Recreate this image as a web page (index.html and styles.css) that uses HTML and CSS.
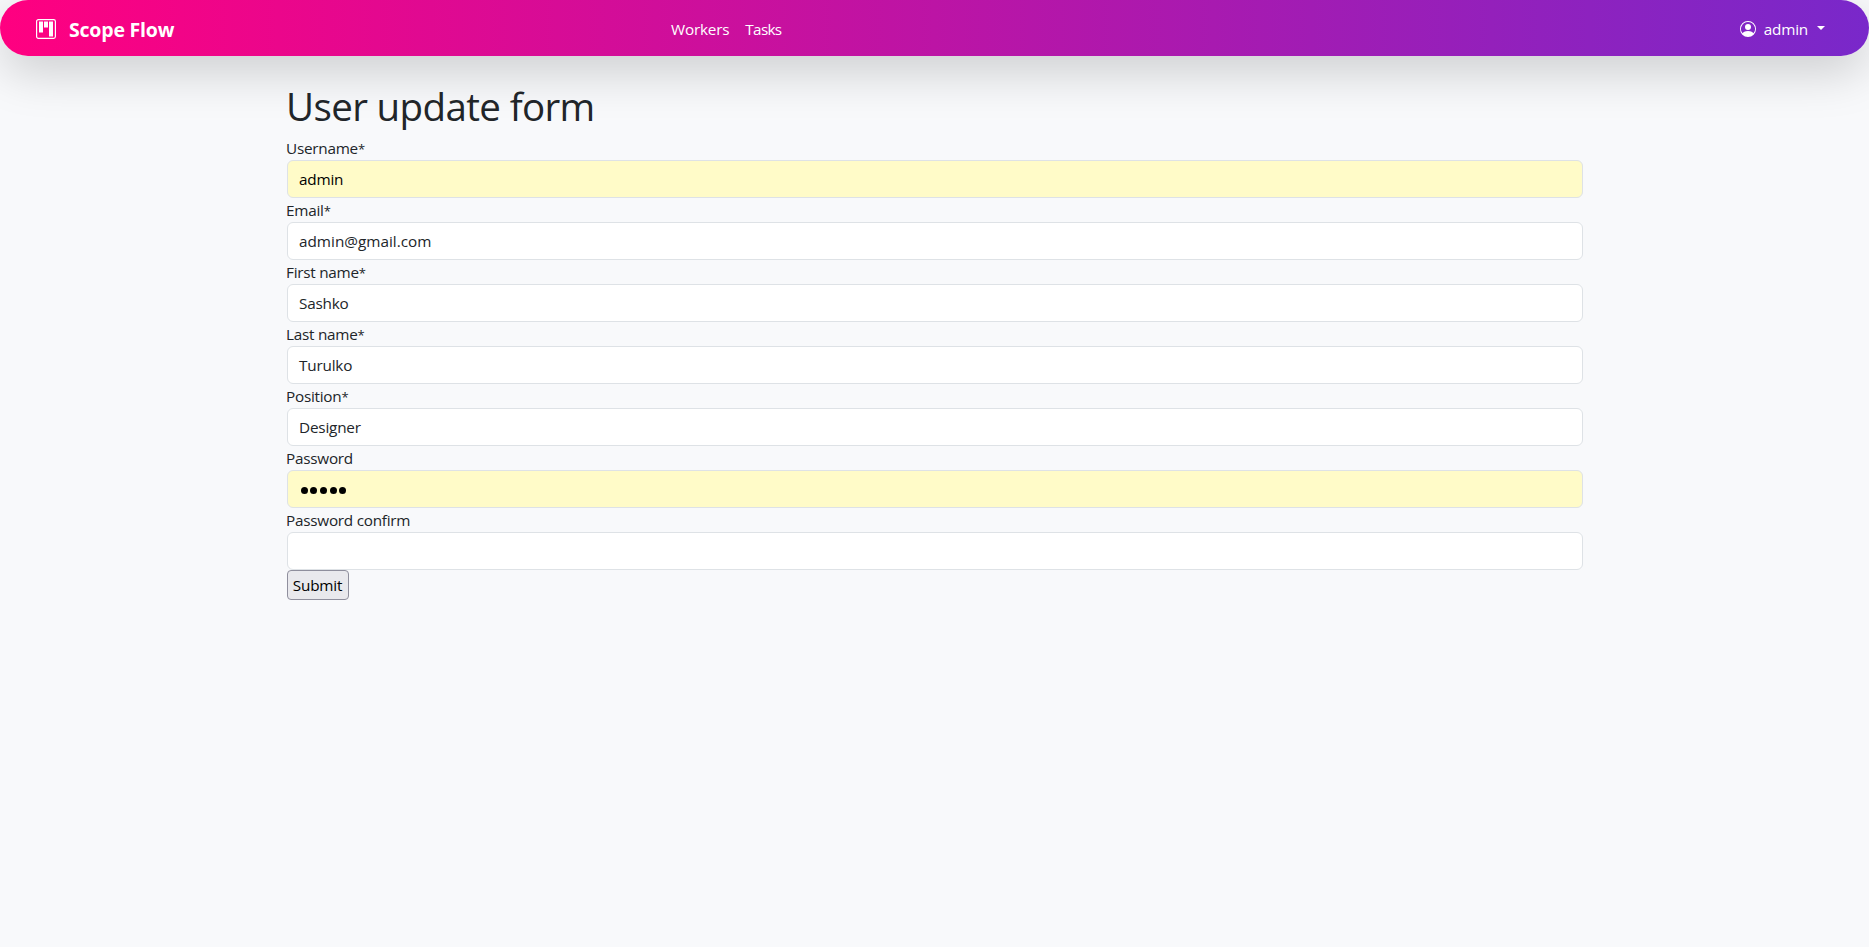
FILE: index.html
```html
<!DOCTYPE html>
<html lang="en">
<head>
<meta charset="utf-8">
<title>Scope Flow</title>
<link rel="stylesheet" href="styles.css">
</head>
<body>
<nav class="navbar">
  <a class="brand">
    <svg class="brand-icon" viewBox="0 0 20 20" width="20" height="20"><rect x=".6" y=".6" width="18.8" height="18.8" rx="1.8" fill="none" stroke="#fff" stroke-width="1.2"/><path fill="#fff" d="M3 2.5h4v11H3zM8 2.5h4v6H8zM13 2.5h4v15h-4z"/></svg>
    <span class="brand-name">Scope Flow</span>
  </a>
  <div class="links"><a class="link workers">Workers</a><a class="link tasks">Tasks</a></div>
  <a class="user">
    <svg class="user-icon" viewBox="0 0 16 16" width="16" height="16" fill="#fff"><path d="M11 6a3 3 0 1 1-6 0 3 3 0 0 1 6 0"/><path fill-rule="evenodd" d="M0 8a8 8 0 1 1 16 0A8 8 0 0 1 0 8m8-7a7 7 0 0 0-5.468 11.37C3.242 11.226 4.805 10 8 10s4.757 1.225 5.468 2.37A7 7 0 0 0 8 1"/></svg>
    <span class="user-name">admin</span><span class="caret"></span>
  </a>
</nav>
<main class="container">
  <h1 class="title">User update form</h1>
  <form class="form">
    <label class="label">Username<span class="star">*</span></label><div class="input filled">admin</div>
    <label class="label">Email<span class="star">*</span></label><div class="input email">admin@gmail.com</div>
    <label class="label">First name<span class="star">*</span></label><div class="input">Sashko</div>
    <label class="label">Last name<span class="star">*</span></label><div class="input">Turulko</div>
    <label class="label">Position<span class="star">*</span></label><div class="input">Designer</div>
    <label class="label">Password</label><div class="input filled"><span class="dots"><i></i><i></i><i></i><i></i><i></i></span></div>
    <label class="label">Password confirm</label><div class="input"></div>
    <button class="submit" type="button">Submit</button>
  </form>
</main>
</body>
</html>
```

FILE: styles.css
```css
* { box-sizing: border-box; }
body { margin: 0; background: #f8f9fb; color: #212529; font: 15.3px/24px "Open Sans", "Noto Sans", sans-serif; letter-spacing: -.2px; }
.navbar { height: 56px; display: grid; grid-template-columns: 671px 1fr auto; align-items: center; padding-right: 44px; border-radius: 28px; background: linear-gradient(90deg, #ff0080, #7928ca); box-shadow: 0 16px 48px rgba(0,0,0,.175); color: #fff; }
.brand { display: flex; align-items: center; padding-left: 36px; }
.brand-icon { flex: none; margin: 2px 13px 0 0; }
.brand-name { font-size: 19.5px; font-weight: 700; line-height: 30px; letter-spacing: -.2px; padding-top: 3px; }
.links { display: flex; gap: 16px; padding-top: 1px; }
.tasks { letter-spacing: -.7px; }
.user { display: flex; align-items: center; }
.user-icon { margin: 2px 8px 0 0; }
.user-name { padding-top: 1px; }
.caret { margin-left: 9px; border: 4px solid transparent; border-top-color: #fff; border-bottom: 0; }
.container { width: 1296px; margin: 24px 286px 0 287px; }
.title { margin: 0 0 8px -1px; padding-top: 2px; height: 48px; font-size: 38.5px; font-weight: 400; line-height: 48px; letter-spacing: -.63px; }
.form { display: flex; flex-direction: column; align-items: stretch; }
.label { height: 24px; margin-left: -1px; letter-spacing: -.25px; }
.star { font-size: 13px; }
.input { height: 38px; padding: 6px 11px; border: 1px solid #dee2e6; border-radius: 6px; background: #fff; }
.email { letter-spacing: 0; }
.filled { background: #fffbc8; color: #000; }
.dots { display: flex; gap: 2.7px; padding: 10px 0 0 1.5px; }
.dots i { width: 7px; height: 7px; border-radius: 50%; background: #000; }
.submit { align-self: flex-start; width: 62px; height: 30px; padding: 0 1px 0 0; border: 1px solid #8f8f9d; border-radius: 4px; background: #e9e9ed; color: #000; font: inherit; letter-spacing: inherit; }
```
